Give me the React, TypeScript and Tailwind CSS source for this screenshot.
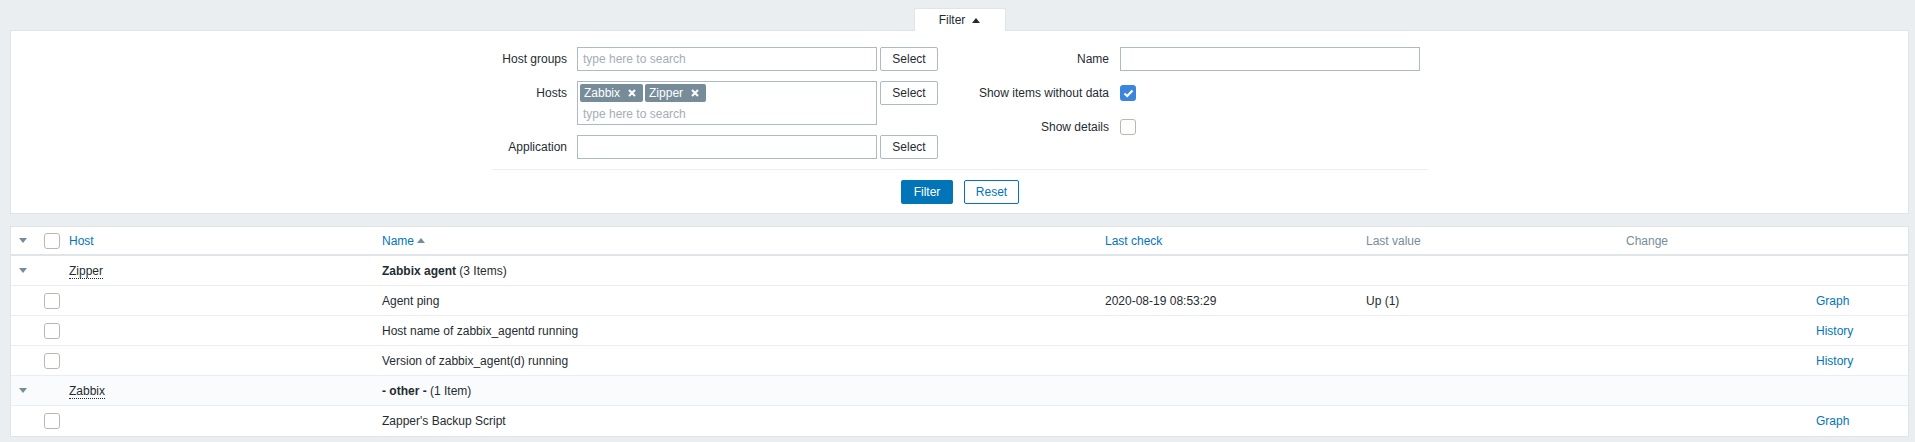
import React from 'react'

const font = { fontFamily: '"Liberation Sans", Arial, sans-serif' }

const Caret = ({ up = false, className = '' }: { up?: boolean; className?: string }) => (
  <svg className={className} width="8" height="5" viewBox="0 0 8 5">
    {up ? <path d="M0 5 L4 0 L8 5 Z" fill="currentColor" /> : <path d="M0 0 L8 0 L4 5 Z" fill="currentColor" />}
  </svg>
)

const Box = ({ checked = false }: { checked?: boolean }) =>
  checked ? (
    <span className="flex h-4 w-4 items-center justify-center rounded-[3px] bg-[#3b86dc]">
      <svg width="11" height="9" viewBox="0 0 11 9">
        <path d="M1.5 4.5 L4.2 7 L9.5 1.5" stroke="white" strokeWidth="2.2" fill="none" />
      </svg>
    </span>
  ) : (
    <span className="block h-4 w-4 rounded-[3px] border border-[#bdb6ae] bg-white" />
  )

const SelectBtn = () => (
  <button className="h-[24px] w-[58px] rounded-[2px] border border-[#acbbc2] bg-white text-[12px] text-[#1f2c33]">
    Select
  </button>
)

const Tag = ({ name }: { name: string }) => (
  <span className="flex h-[18px] items-center gap-[8px] rounded-[2px] bg-[#768d99] pl-[4px] pr-[7px] text-[12px] text-white">
    {name}
    <svg width="8" height="8" viewBox="0 0 8 8">
      <path d="M1 1 L7 7 M7 1 L1 7" stroke="white" strokeWidth="2" />
    </svg>
  </span>
)

const rows = [
  { type: 'group', host: 'Zipper', app: 'Zabbix agent', count: '(3 Items)', bg: 'bg-white' },
  { type: 'item', name: 'Agent ping', check: '2020-08-19 08:53:29', value: 'Up (1)', link: 'Graph' },
  { type: 'item', name: 'Host name of zabbix_agentd running', check: '', value: '', link: 'History' },
  { type: 'item', name: 'Version of zabbix_agent(d) running', check: '', value: '', link: 'History' },
  { type: 'group', host: 'Zabbix', app: '- other -', count: '(1 Item)', bg: 'bg-[#fafbfc]' },
  { type: 'item', name: "Zapper's Backup Script", check: '', value: '', link: 'Graph' },
]

const cols = 'grid grid-cols-[25px_25px_313px_723px_261px_260px_190px_1fr] items-center'

export default function App() {
  return (
    <div style={font} className="min-h-[442px] bg-[#ebeef0] pb-[7px] text-[12px] text-[#1f2c33]">
      {/* Filter tab */}
      <div className="flex justify-center pt-[8px] pl-[10px] pr-[6px]">
        <div className="relative z-10 -mb-px flex h-[23px] w-[92px] items-center justify-center gap-[7px] border border-b-0 border-[#dfe4e7] bg-white">
          <span>Filter</span>
          <Caret up className="text-[#1f2c33]" />
        </div>
      </div>

      {/* Filter panel */}
      <div className="ml-[10px] mr-[6px] border border-[#dfe4e7] bg-white pt-[16px] pb-[9px]">
        <div className="mx-auto w-[937px] pl-[1px]">
          <div className="flex">
            {/* left column */}
            <div className="flex flex-col gap-[10px]">
              <div className="flex items-start">
                <label className="flex h-[24px] w-[75px] items-center justify-end">Host groups</label>
                <div className="ml-[10px] flex h-[24px] w-[300px] items-center border border-[#acbbc2] px-[5px] text-[#a3aeb4]">
                  type here to search
                </div>
                <div className="ml-[3px]"><SelectBtn /></div>
              </div>
              <div className="flex items-start">
                <label className="flex h-[24px] w-[75px] items-center justify-end">Hosts</label>
                <div className="ml-[10px] h-[44px] w-[300px] border border-[#acbbc2] px-[2px] pt-[2px]">
                  <div className="flex gap-[2px]">
                    <Tag name="Zabbix" />
                    <Tag name="Zipper" />
                  </div>
                  <div className="mt-[3px] pl-[3px] text-[#a3aeb4]">type here to search</div>
                </div>
                <div className="ml-[3px]"><SelectBtn /></div>
              </div>
              <div className="flex items-start">
                <label className="flex h-[24px] w-[75px] items-center justify-end">Application</label>
                <div className="ml-[10px] h-[24px] w-[300px] border border-[#acbbc2]" />
                <div className="ml-[3px]"><SelectBtn /></div>
              </div>
            </div>
            {/* right column */}
            <div className="flex flex-col gap-[10px]">
              <div className="flex items-center">
                <label className="flex h-[24px] w-[171px] items-center justify-end">Name</label>
                <div className="ml-[11px] h-[24px] w-[300px] border border-[#acbbc2]" />
              </div>
              <div className="flex items-center">
                <label className="flex h-[24px] w-[171px] items-center justify-end">Show items without data</label>
                <div className="ml-[11px]"><Box checked /></div>
              </div>
              <div className="flex items-center">
                <label className="flex h-[24px] w-[171px] items-center justify-end">Show details</label>
                <div className="ml-[11px]"><Box /></div>
              </div>
            </div>
          </div>
          <div className="mt-[10px] border-t border-[#ebeef0]" />
          <div className="mt-[10px] flex justify-center gap-[11px]">
            <button className="h-[24px] w-[52px] rounded-[2px] bg-[#0275b8] text-white">Filter</button>
            <button className="h-[24px] w-[55px] rounded-[2px] border border-[#0275b8] bg-white text-[#0275b8]">Reset</button>
          </div>
        </div>
      </div>

      {/* Table */}
      <div className="ml-[10px] mr-[6px] mt-[12px] border border-[#dfe4e7] bg-white">
        <div className={`${cols} h-[29px] border-b-2 border-[#dfe4e7]`}>
          <div className="pl-[8px] text-[#768d99]"><Caret /></div>
          <div className="pl-[8px]"><Box /></div>
          <div className="pl-[8px] text-[#0275b8]">Host</div>
          <div className="flex items-center gap-[3px] pl-[8px] text-[#0275b8]">
            Name <Caret up className="text-[#768d99]" />
          </div>
          <div className="pl-[8px] text-[#0275b8]">Last check</div>
          <div className="pl-[8px] text-[#768d99]">Last value</div>
          <div className="pl-[8px] text-[#768d99]">Change</div>
          <div />
        </div>
        {rows.map((r, i) => (
          <div
            key={i}
            className={`${cols} h-[30px] ${i < rows.length - 1 ? 'border-b border-[#ebeef0]' : ''} ${r.type === 'group' ? r.bg : 'bg-white'}`}
          >
            {r.type === 'group' ? (
              <>
                <div className="pl-[8px] text-[#768d99]"><Caret /></div>
                <div />
                <div className="pl-[8px]">
                  <span className="border-b border-dotted border-[#1f2c33]">{r.host}</span>
                </div>
                <div className="pl-[8px]">
                  <b>{r.app}</b> {r.count}
                </div>
                <div />
                <div />
                <div />
                <div />
              </>
            ) : (
              <>
                <div />
                <div className="pl-[8px]"><Box /></div>
                <div />
                <div className="pl-[8px]">{r.name}</div>
                <div className="pl-[8px]">{r.check}</div>
                <div className="pl-[8px]">{r.value}</div>
                <div />
                <div className="pl-[8px] text-[#0275b8]">{r.link}</div>
              </>
            )}
          </div>
        ))}
      </div>
    </div>
  )
}
